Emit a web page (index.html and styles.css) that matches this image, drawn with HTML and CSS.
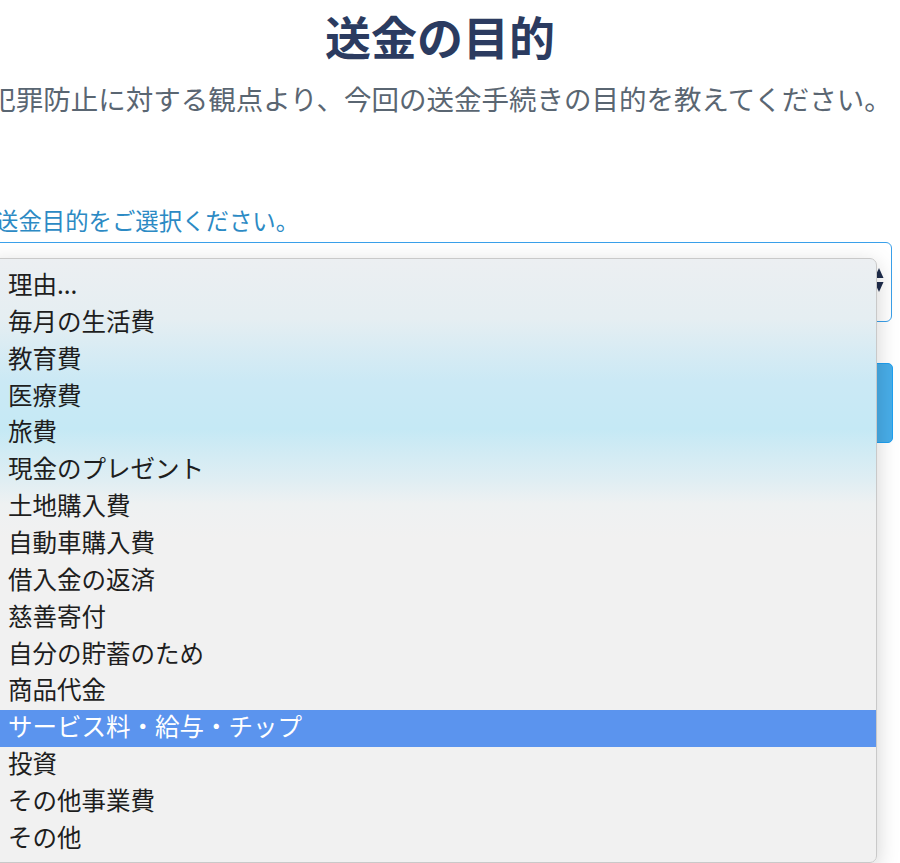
FILE: index.html
```html
<!doctype html>
<html lang="ja">
    <head>
        <meta charset="UTF-8" />
        <meta name="viewport" content="width=device-width, initial-scale=1.0" />
        <title>送金の目的</title>
        <link rel="stylesheet" href="styles.css">
    </head>
    <body>
        <main class="page">
            <h1 class="title">送金の目的</h1>
            <p class="lead">犯罪防止に対する観点より、今回の送金手続きの目的を教えてください。</p>

            <label class="field-label">送金目的をご選択ください。</label>
            <div class="select">
                <span class="select-value">理由...</span>
                <svg class="select-arrows" width="10" height="26" viewBox="0 0 10 26">
                    <path d="M5 1 L9.5 11 L0.5 11 Z" fill="#1f2d4d" />
                    <path d="M0.5 15 L9.5 15 L5 25 Z" fill="#1f2d4d" />
                </svg>
            </div>
            <button class="next">次へ</button>

            <!-- open select list (native popup) -->
            <ul class="menu">
                <li>理由...</li>
                <li>毎月の生活費</li>
                <li>教育費</li>
                <li>医療費</li>
                <li>旅費</li>
                <li>現金のプレゼント</li>
                <li>土地購入費</li>
                <li>自動車購入費</li>
                <li>借入金の返済</li>
                <li>慈善寄付</li>
                <li>自分の貯蓄のため</li>
                <li>商品代金</li>
                <li class="active">サービス料・給与・チップ</li>
                <li>投資</li>
                <li>その他事業費</li>
                <li>その他</li>
            </ul>
        </main>
    </body>
</html>
```

FILE: styles.css
```css
html,
body {
    margin: 0;
    padding: 0;
    height: 863px;
    overflow: hidden;
    background: #fff;
}

body {
    font-family: "Noto Sans CJK JP", "Noto Sans", sans-serif;
}

.page {
    position: relative;
    width: 904px;
    margin-left: -12px;
    padding-top: 7px;
}

.title {
    margin: 0;
    text-align: center;
    font-size: 46px;
    line-height: 56px;
    font-weight: 700;
    color: #2b3b60;
}

.lead {
    margin: 17px 0 0;
    text-align: center;
    font-size: 27.5px;
    line-height: 36px;
    color: #5a6672;
    white-space: nowrap;
}

.field-label {
    display: block;
    margin: 89px 0 0 7px;
    font-size: 23.4px;
    line-height: 30px;
    color: #2c8ac4;
    white-space: nowrap;
}

.select {
    display: flex;
    align-items: center;
    justify-content: space-between;
    box-sizing: border-box;
    height: 80px;
    margin-top: 7px;
    padding: 0 7px 0 20px;
    border: 1.5px solid #3aa0ea;
    border-radius: 6px;
    background: #fff;
    font-size: 24px;
    color: #222;
}

.select-arrows {
    display: block;
    margin-top: -4px;
}

.next {
    display: block;
    box-sizing: border-box;
    width: 905px;
    height: 80px;
    margin-top: 41px;
    border: 1px solid #1e9ff0;
    border-radius: 5px;
    background: #48ade8;
    color: #fff;
    font-family: inherit;
    font-size: 24px;
}

.menu {
    position: absolute;
    top: 258px;
    left: 0;
    box-sizing: border-box;
    width: 889px;
    height: 605px;
    margin: 0;
    padding: 9px 0 0;
    list-style: none;
    border: 1px solid #c9c9c9;
    border-radius: 7px;
    background: linear-gradient(
        to bottom,
        #eceff2 0,
        #e5eef2 60px,
        #cbe9f5 122px,
        #c5e9f5 170px,
        #e0eef3 222px,
        #eef1f2 245px,
        #f1f1f1 280px
    );
    box-shadow: 0 6px 22px rgba(0, 0, 0, 0.18);
}

.menu li {
    height: 36.87px;
    padding-left: 19px;
    font-size: 24.5px;
    line-height: 31px;
    color: #1e1e1e;
    white-space: nowrap;
}

.menu li.active {
    background: #5b94ee;
    color: #fff;
}
```
